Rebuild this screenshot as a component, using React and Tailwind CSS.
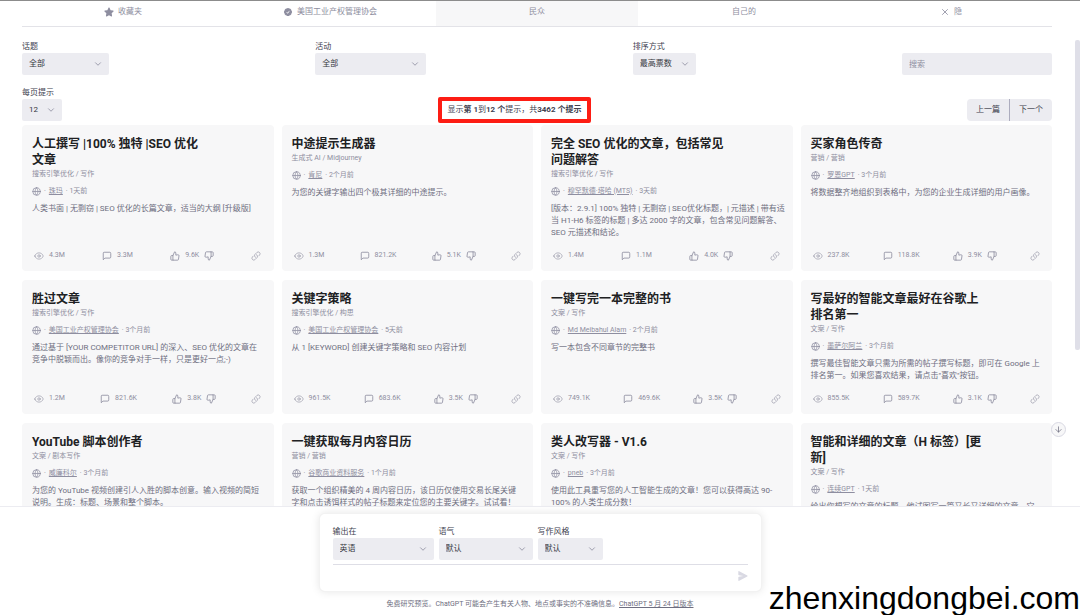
import React from 'react';
import { FaStar } from 'react-icons/fa';
import { HiCheckBadge, HiOutlineEye, HiOutlineLink } from 'react-icons/hi2';
import { FiArrowDown, FiChevronDown, FiGlobe, FiMessageSquare, FiThumbsDown, FiThumbsUp, FiX } from 'react-icons/fi';

const tabs = [
  { label: '收藏夹', icon: FaStar },
  { label: '美国工业产权管理协会', icon: HiCheckBadge },
  { label: '民众', active: true },
  { label: '自己的' },
  { label: '隐', icon: FiX },
];

const prompts = [
  {
    title: '人工撰写 |100% 独特 |SEO 优化\n文章',
    category: '搜索引擎优化 / 写作',
    author: '珠玛',
    time: '1天前',
    text: '人类书面 | 无剽窃 | SEO 优化的长篇文章，适当的大纲 [升级版]',
    views: '4.3M',
    usages: '3.3M',
    votes: '9.6K',
  },
  {
    title: '中途提示生成器',
    category: '生成式 AI / Midjourney',
    author: '肯尼',
    time: '2个月前',
    text: '为您的关键字输出四个极其详细的中途提示。',
    views: '1.3M',
    usages: '821.2K',
    votes: '5.1K',
  },
  {
    title: '完全 SEO 优化的文章，包括常见\n问题解答',
    category: '搜索引擎优化 / 写作',
    author: '穆罕默德·塔哈 (MTS)',
    time: '3天前',
    text: '[版本：2.9.1] 100% 独特 | 无剽窃 | SEO优化标题，| 元描述 | 带有适\n当 H1-H6 标签的标题 | 多达 2000 字的文章，包含常见问题解答、\nSEO 元描述和结论。',
    views: '1.4M',
    usages: '1.1M',
    votes: '4.0K',
  },
  {
    title: '买家角色传奇',
    category: '营销 / 营销',
    author: '罗恩GPT',
    time: '3个月前',
    text: '将数据整齐地组织到表格中，为您的企业生成详细的用户画像。',
    views: '237.8K',
    usages: '118.8K',
    votes: '3.9K',
  },
  {
    title: '胜过文章',
    category: '搜索引擎优化 / 写作',
    author: '美国工业产权管理协会',
    time: '3个月前',
    text: '通过基于 [YOUR COMPETITOR URL] 的深入、SEO 优化的文章在\n竞争中脱颖而出。像你的竞争对手一样，只是更好一点;-)',
    views: '1.2M',
    usages: '821.6K',
    votes: '3.8K',
  },
  {
    title: '关键字策略',
    category: '搜索引擎优化 / 构思',
    author: '美国工业产权管理协会',
    time: '5天前',
    text: '从 1 [KEYWORD] 创建关键字策略和 SEO 内容计划',
    views: '961.5K',
    usages: '683.6K',
    votes: '3.5K',
  },
  {
    title: '一键写完一本完整的书',
    category: '文案 / 写作',
    author: 'Md Meibahul Alam',
    time: '2个月前',
    text: '写一本包含不同章节的完整书',
    views: '749.1K',
    usages: '469.6K',
    votes: '3.5K',
  },
  {
    title: '写最好的智能文章最好在谷歌上\n排名第一',
    category: '文案 / 写作',
    author: '墨萨尔阿兰',
    time: '3个月前',
    text: '撰写最佳智能文章只需为所需的帖子撰写标题，即可在 Google 上\n排名第一。如果您喜欢结果，请点击"喜欢"按钮。',
    views: '855.5K',
    usages: '589.7K',
    votes: '3.1K',
  },
  {
    title: 'YouTube 脚本创作者',
    category: '文案 / 剧本写作',
    author: '威廉科尔',
    time: '3个月前',
    text: '为您的 YouTube 视频创建引人入胜的脚本创意。输入视频的简短\n说明。生成：标题、场景和整个脚本。',
  },
  {
    title: '一键获取每月内容日历',
    category: '营销 / 营销',
    author: '谷歌商业资料服务',
    time: '1个月前',
    text: '获取一个组织精美的 4 周内容日历，该日历仅使用交易长尾关键\n字和点击诱饵样式的帖子标题来定位您的主要关键字。试试看！',
  },
  {
    title: '类人改写器 - V1.6',
    category: '文案 / 写作',
    author: 'pneb',
    time: '3个月前',
    text: '使用此工具重写您的人工智能生成的文章！您可以获得高达 90-\n100% 的人类生成分数！',
  },
  {
    title: '智能和详细的文章（H 标签）[更\n新]',
    category: '文案 / 写作',
    author: '连续GPT',
    time: '1天前',
    text: '给出你想写的文章的标题，他试图写一篇又长又详细的文章，它',
  },
];

function SelectField({ id, label, value, width }) {
  return (
    <div className="flex flex-col">
      <label htmlFor={id} className="text-[8px] leading-[13px] text-[#40414f]">{label}</label>
      <div className={`relative ${width}`}>
        <select
          id={id}
          className="block h-[22px] w-full appearance-none rounded-xs bg-[#ececf1] pl-[7px] text-[8px] text-[#353740] outline-none"
        >
          <option>{value}</option>
        </select>
        <FiChevronDown className="pointer-events-none absolute right-1.5 top-1.5 size-2.5 text-[#8e8ea0]" />
      </div>
    </div>
  );
}

function PromptCard({ prompt }) {
  return (
    <article className="flex min-w-0 flex-col rounded-sm bg-[#f7f7f8] px-2.5 pt-[11px] pb-[9px]">
      <h3 className="whitespace-pre text-[12px] leading-4 font-bold text-[#202123]">{prompt.title}</h3>
      <p className="text-[7px] leading-3 text-[#8e8ea0]">{prompt.category}</p>
      <p className="mt-[5px] flex items-center gap-[3px] text-[7px] leading-3 text-[#8e8ea0]">
        <FiGlobe className="size-[9px]" />
        <span>·</span>
        <a href="#author" className="underline">{prompt.author}</a>
        <span>· {prompt.time}</span>
      </p>
      <p className="mt-1.5 whitespace-pre text-[8px] leading-3 text-[#6e6e80]">{prompt.text}</p>
      {prompt.views && (
        <div className="mt-auto flex items-end justify-between px-0.5 pt-2.5 text-[7px] leading-[13px] text-[#8e8ea0]">
          <span className="flex items-center gap-[5px]">
            <HiOutlineEye className="size-2.5" />
            {prompt.views}
          </span>
          <span className="flex items-center gap-[5px]">
            <FiMessageSquare className="size-2.5" />
            {prompt.usages}
          </span>
          <span className="flex items-center gap-[5px]">
            <button type="button" aria-label="赞"><FiThumbsUp className="block size-2.5" /></button>
            {prompt.votes}
            <button type="button" aria-label="踩"><FiThumbsDown className="block size-2.5" /></button>
          </span>
          <a href="#link" aria-label="链接" className="flex h-[13px] items-center">
            <HiOutlineLink className="size-2.5" />
          </a>
        </div>
      )}
    </article>
  );
}

export default function App() {
  return (
    <div
      lang="zh-CN"
      className="relative flex h-screen flex-col overflow-hidden border-t border-[#8c8c8c] bg-white font-['Roboto','Noto_Sans_CJK_SC',sans-serif]"
    >
      <main className="min-h-0 flex-1 overflow-hidden pr-7 pl-[22px]">
        <nav className="grid grid-cols-5 gap-1.25 border-b border-[#e3e3e8]">
          {tabs.map(({ label, icon: Icon, active }) => (
            <button
              key={label}
              type="button"
              className={`flex h-[25px] items-center justify-center gap-1 pb-1 text-[8px] text-[#8e8ea0] ${active ? 'bg-[#f7f7f8]' : ''}`}
            >
              {Icon && <Icon className="size-2.5" />}
              {label}
            </button>
          ))}
        </nav>

        <div className="mt-[13px] flex items-end justify-between">
          <SelectField id="topic" label="话题" value="全部" width="w-[87px]" />
          <SelectField id="activity" label="活动" value="全部" width="w-[111px]" />
          <SelectField id="sort" label="排序方式" value="最高票数" width="w-[63px]" />
          <input
            type="search"
            aria-label="搜索"
            placeholder="搜索"
            className="h-[22px] w-[150px] rounded-xs bg-[#ececf1] px-[7px] text-[8px] outline-none placeholder:text-[#8e8ea0]"
          />
        </div>

        <div className="mt-[11px] flex items-end justify-between">
          <SelectField id="page-size" label="每页提示" value="12" width="w-10" />
          <p className="-mb-0.5 flex h-[26px] w-[153px] items-center justify-center rounded-xs border-4 border-[#fd1d14] text-[8px] whitespace-pre text-[#40414f]">
            显示<b>第 1</b>到<b>12 个</b>提示，共<b>3462 个提示</b>
          </p>
          <div className="flex h-[22px] divide-x divide-[#acacbe] overflow-hidden rounded-sm bg-[#ececf1] text-[8px] text-[#40414f]">
            <button type="button" className="w-[43px]">上一篇</button>
            <button type="button" className="w-[42px]">下一个</button>
          </div>
        </div>

        <div className="mt-1 grid grid-cols-4 gap-x-2 gap-y-[9px]">
          {prompts.map((prompt) => (
            <PromptCard key={prompt.title} prompt={prompt} />
          ))}
        </div>
      </main>

      <footer className="flex flex-col items-center border-t border-[#ececf1] bg-white pt-1.5 pb-1.25">
        <form className="w-[443px] rounded-md border border-black/5 bg-white px-[13px] pt-[11px] shadow-[0_0_8px_rgba(0,0,0,0.1)]">
          <div className="flex gap-[5px]">
            <SelectField id="language" label="输出在" value="英语" width="w-[101px]" />
            <SelectField id="tone" label="语气" value="默认" width="w-[94px]" />
            <SelectField id="style" label="写作风格" value="默认" width="w-[65px]" />
          </div>
          <div className="mt-1 flex items-center border-t border-[#dedee6] pb-1">
            <textarea aria-label="消息" rows={1} className="h-[22px] flex-1 resize-none text-[8px] outline-none" />
            <button type="button" aria-label="发送" className="text-[#d9d9e3]">
              <svg viewBox="0 0 16 16" fill="currentColor" className="size-2.5">
                <path d="M.5 1.163A1 1 0 0 1 1.97.28l12.868 6.837a1 1 0 0 1 0 1.766L1.969 15.72A1 1 0 0 1 .5 14.836V10.33a1 1 0 0 1 .816-.983L8.5 8 1.316 6.653A1 1 0 0 1 .5 5.67V1.163Z" />
              </svg>
            </button>
          </div>
        </form>
        <p className="mt-1.5 text-[7px] leading-3 text-[#6e6e80]">
          免费研究预览。ChatGPT 可能会产生有关人物、地点或事实的不准确信息。
          <a href="#release" className="underline">ChatGPT 5 月 24 日版本</a>
        </p>
      </footer>

      <div className="absolute top-[39px] right-0 h-[310px] w-[5px] rounded-xs bg-[#dfdfe8]" />
      <button
        type="button"
        aria-label="向下滚动"
        className="absolute right-3.5 bottom-[178px] flex size-[15px] items-center justify-center rounded-full border border-[#d9d9e3] bg-[#f7f7f8] text-[#6e6e80]"
      >
        <FiArrowDown className="size-[9px]" />
      </button>
      <span className="absolute right-0 bottom-0 font-['Liberation_Sans',sans-serif] text-[32px] leading-[34px] text-black">
        zhenxingdongbei.com
      </span>
    </div>
  );
}
